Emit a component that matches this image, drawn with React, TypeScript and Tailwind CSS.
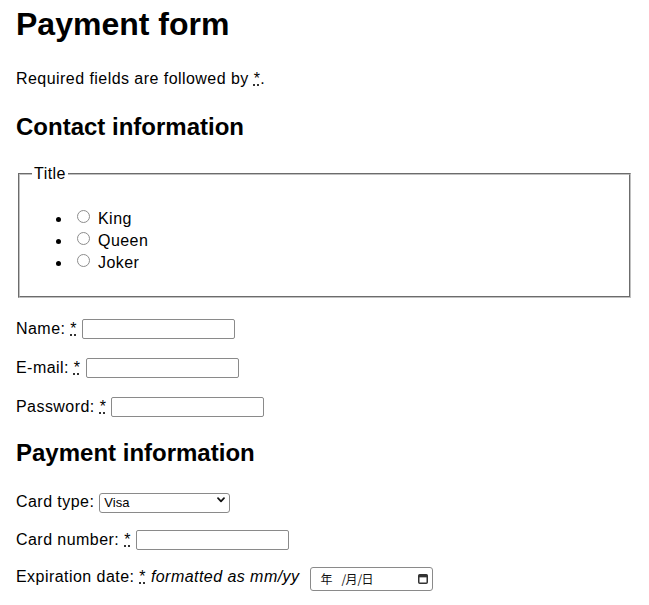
const titles = ["King", "Queen", "Joker"];

function Req() {
  return <abbr title="required">*</abbr>;
}

function TextField({ label, type = "text" }: { label: string; type?: string }) {
  return (
    <p className="flex h-[20px] items-center">
      <label className="leading-[20px] whitespace-pre">
        {label} <Req />
      </label>
      <input
        type={type}
        className="ml-[5px] h-[20px] w-[153px] rounded-[2px] border border-[#8a8a8a] bg-white px-[2px] text-[13px]"
      />
    </p>
  );
}

function CalendarIcon() {
  return (
    <svg width="10" height="10" viewBox="0 0 10 10" className="ml-auto text-[#333]">
      <rect x="0.75" y="0.75" width="8.5" height="8.5" rx="1" fill="none" stroke="currentColor" strokeWidth="1.5" />
      <rect x="0.75" y="0.75" width="8.5" height="2.6" fill="currentColor" />
    </svg>
  );
}

export default function App() {
  return (
    <div className="min-h-screen bg-white px-4 pt-1 text-black font-['Liberation_Sans','Noto_Sans_CJK_SC',sans-serif]">
      <form>
        <h1 className="text-[32px] font-bold leading-[40px]">Payment form</h1>
        <p className="mt-[25px] text-base leading-5 tracking-[0.45px]">
          Required fields are followed by <Req />.
        </p>

        <section>
          <h2 className="mt-6 text-2xl font-bold leading-[28px]">Contact information</h2>
          <fieldset className="mx-[2px] mt-6 border-2 border-[#c0c0c0] px-3 pb-[22px] [--tw-border-style:groove] [border-style:groove]">
            <legend className="px-[2px] leading-[18px] tracking-[0.45px]">Title</legend>
            <ul className="mt-[25px] list-disc pl-10">
              {titles.map((t) => (
                <li key={t} className="leading-[22px] tracking-[0.45px]">
                  <label>
                    <input
                      type="radio"
                      name="title"
                      value={t}
                      className="ml-[5px] mr-[8px] inline-block h-[13px] w-[13px] appearance-none rounded-full border border-[#8d8d8d] bg-white align-[1px]"
                    />
                    {t}
                  </label>
                </li>
              ))}
            </ul>
          </fieldset>

          <div className="mt-[21px] tracking-[0.45px]">
            <TextField label="Name:" />
          </div>
          <div className="mt-[19px] tracking-[0.45px]">
            <TextField label="E-mail:" type="email" />
          </div>
          <div className="mt-[19px] tracking-[0.45px]">
            <TextField label="Password:" type="password" />
          </div>
        </section>

        <section>
          <h2 className="mt-[22px] text-2xl font-bold leading-[28px]">Payment information</h2>

          {/* card type select */}
          <p className="mt-[25px] flex h-[20px] items-center tracking-[0.45px]">
            <label className="leading-[20px]">Card type:</label>
            <span className="relative ml-[5px] tracking-normal">
              <select className="h-[20px] w-[131px] appearance-none rounded-[3px] border border-[#8a8a8a] bg-white pl-[4px] text-[13px] leading-[18px]">
                <option>Visa</option>
                <option>Mastercard</option>
                <option>American Express</option>
              </select>
              <svg
                width="8"
                height="6"
                viewBox="0 0 8 6"
                className="pointer-events-none absolute right-[5px] top-[7px]"
              >
                <path d="M1 1.2 L4 4.4 L7 1.2" fill="none" stroke="#111" strokeWidth="1.7" strokeLinecap="round" strokeLinejoin="round" />
              </svg>
            </span>
          </p>

          <div className="mt-[18px] tracking-[0.45px]">
            <TextField label="Card number:" />
          </div>

          <p className="mt-[17px] flex items-start tracking-[0.45px]">
            <label className="leading-[20px] whitespace-pre">
              Expiration date: <Req /> <em className="italic">formatted as mm/yy</em>
            </label>
            <span className="ml-[11px] flex h-[24px] w-[123px] items-center rounded-[3px] border border-[#8a8a8a] bg-white pl-[9px] pr-[4px] text-[12px] tracking-normal text-[#111] font-['Noto_Sans_CJK_SC',sans-serif]">
              <span className="w-[21px]">年</span>
              <span className="w-[4px]">/</span>
              <span>月</span>
              <span className="w-[4px]">/</span>
              <span>日</span>
              <CalendarIcon />
            </span>
          </p>
        </section>
      </form>
    </div>
  );
}
